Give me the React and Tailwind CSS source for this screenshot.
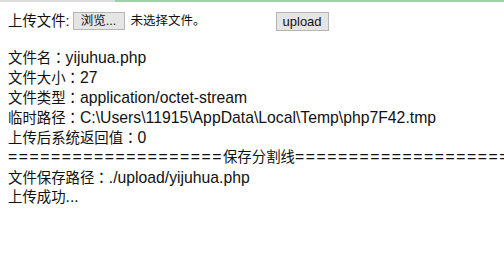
const CJK = /([\u3000-\u303f\u4e00-\u9fff\uff00-\uffef]+|=+)/;

function Line({ text }) {
  const parts = text.split(CJK).filter(Boolean);
  return (
    <div className="h-[20px]">
      {parts.map((p, i) => {
        if (p[0] === "=") {
          return (
            <span key={i} className="tracking-[1.55px]">
              {p}
            </span>
          );
        }
        if (CJK.test(p)) {
          // full-width colon sits centred in the reference font
          return p.split(/(：)/).filter(Boolean).map((q, j) =>
            q === "：" ? (
              <span key={i + "-" + j} className="text-[14.4px] font-['Noto_Sans_CJK_TC',sans-serif]">
                {q}
              </span>
            ) : (
              <span key={i + "-" + j} className="text-[14.4px]">
                {q}
              </span>
            )
          );
        }
        return <span key={i}>{p}</span>;
      })}
    </div>
  );
}

export default function App() {
  const lines = [
    "文件名：yijuhua.php",
    "文件大小：27",
    "文件类型：application/octet-stream",
    "临时路径：C:\\Users\\11915\\AppData\\Local\\Temp\\php7F42.tmp",
    "上传后系统返回值：0",
    "====================保存分割线====================",
    "文件保存路径：./upload/yijuhua.php",
    "上传成功...",
  ];
  return (
    <div className="w-[504px] h-[256px] overflow-hidden bg-white text-[#111] font-['Liberation_Sans','Noto_Sans_CJK_SC',sans-serif]">
      <div className="flex h-[3px]">
        <div className="w-[115px] h-[2px] bg-[#dcdcdc]" />
        <div className="flex-1 h-[2px] bg-[#9fd0a8]" />
      </div>
      <div className="flex items-center h-[18px] mt-[9px] pl-[8px]">
        <span className="text-[14.4px] leading-[18px]">上传文件:</span>
        <span className="ml-[3px] h-[18px] w-[52px] flex items-center justify-center border border-[#b5b5b5] bg-[#e5e5e5] text-[12.5px] leading-none">浏览...</span>
        <span className="ml-[6px] w-[145px] text-[12.5px]">未选择文件。</span>
        <span className="h-[19px] w-[53px] flex items-center justify-center border border-[#b5b5b5] bg-[#e5e5e5] text-[13px] leading-none">upload</span>
      </div>
      <div className="mt-[17px] pl-[8px] text-[15.75px] leading-[20px] whitespace-nowrap">
        {lines.map((l, i) => (
          <Line key={i} text={l} />
        ))}
      </div>
    </div>
  );
}
